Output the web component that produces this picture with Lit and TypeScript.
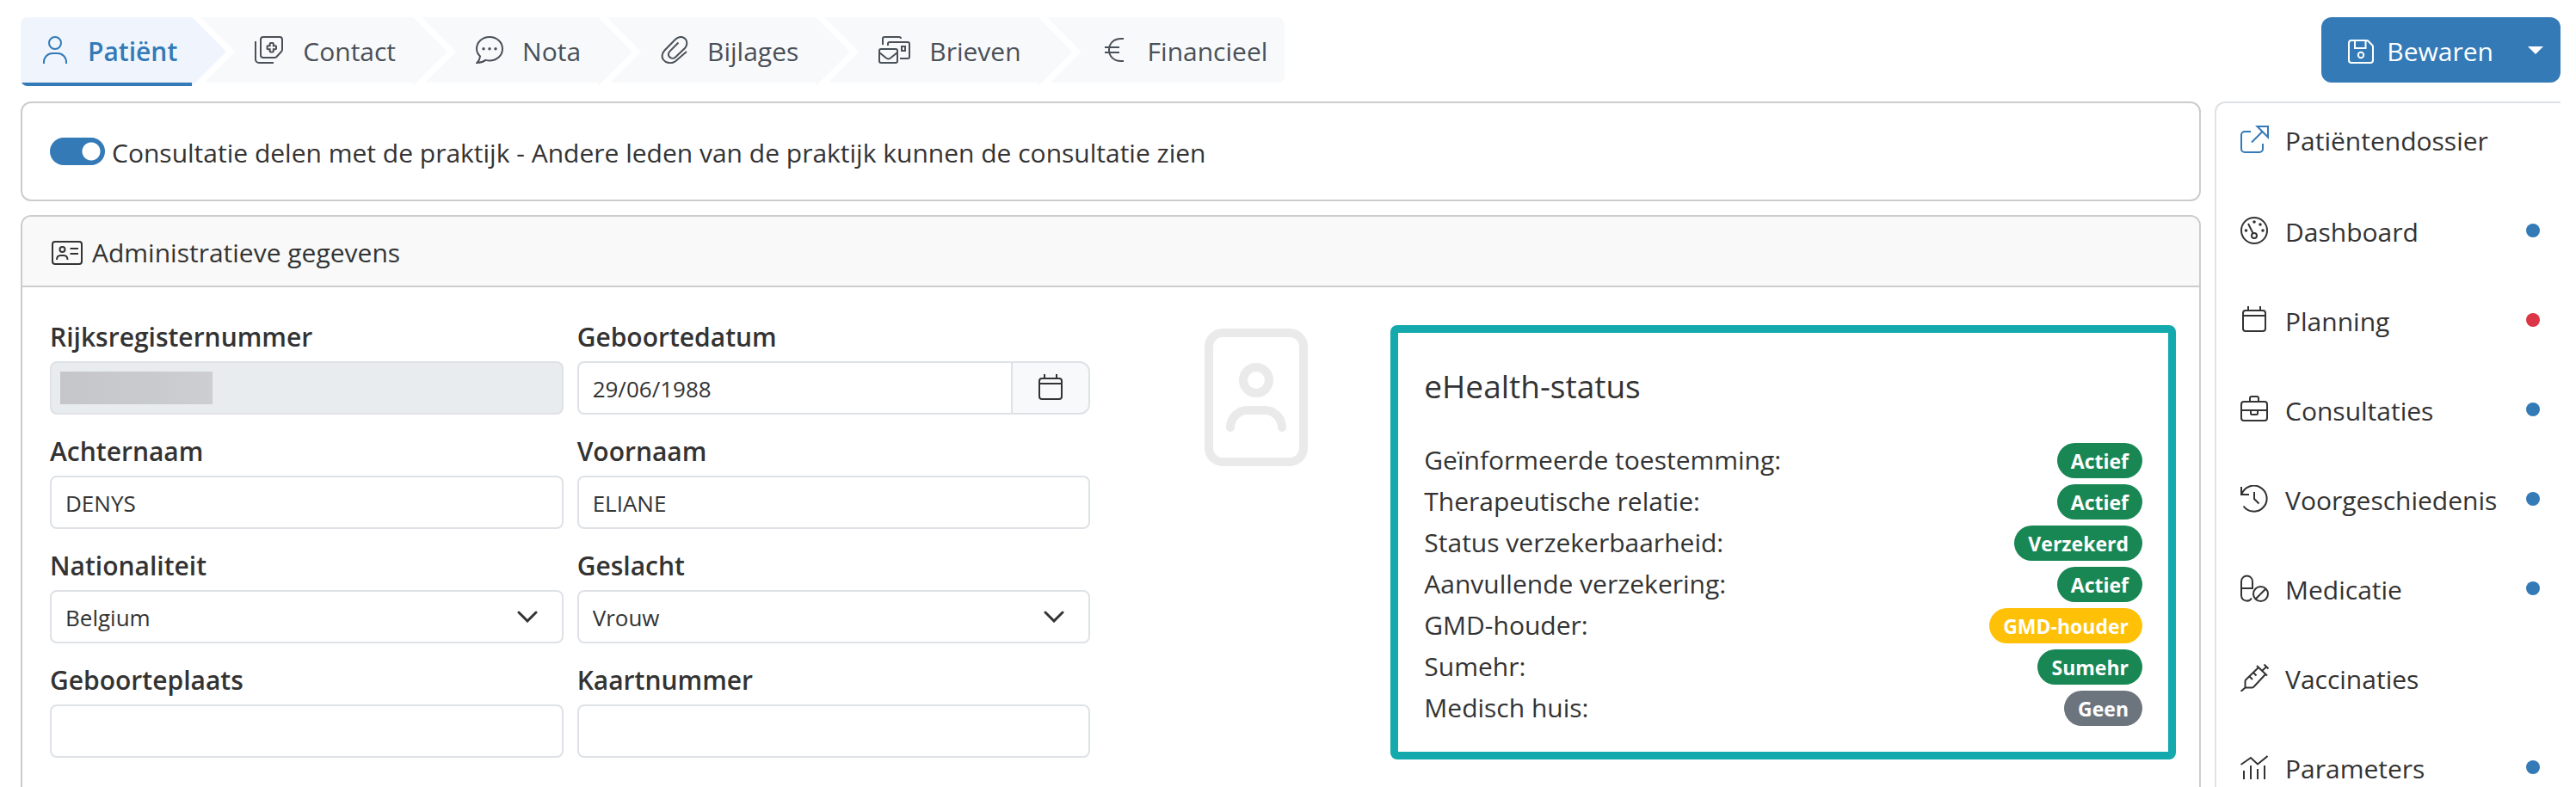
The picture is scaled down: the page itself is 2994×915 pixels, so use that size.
import { LitElement, html, svg, css, nothing } from "lit";
import type { SVGTemplateResult } from "lit";
import { customElement, property, state } from "lit/decorators.js";
import { classMap } from "lit/directives/class-map.js";

interface Glyph {
  w: number;
  h: number;
  body: SVGTemplateResult;
}

const glyphs: Record<string, Glyph> = {
  person: {
    w: 32, h: 32,
    body: svg`<circle cx="16" cy="8" r="7"/><path d="M3 32v-2a10 10 0 0 1 10-10h6a10 10 0 0 1 10 10v2"/>`,
  },
  contact: {
    w: 34, h: 32,
    body: svg`<path d="M10 1h19a3 3 0 0 1 3 3v11.500q0 1.500-1 2.500l-5.500 6q-1 1-2.500 1H10a3 3 0 0 1-3-3V4a3 3 0 0 1 3-3z"/><path d="M1 6v21a4 4 0 0 0 4 4h17"/><path d="M18.500 8h2.500q.8 0 .8.800v2.400h2.400q.8 0 .8.800v2.500q0 .8-.8.800h-2.400v2.400q0 .8-.8.800h-2.500q-.8 0-.8-.800v-2.400h-2.400q-.8 0-.8-.800v-2.500q0-.8.800-.800h2.400v-2.400q0-.8.800-.800z"/>`,
  },
  chat: {
    w: 32, h: 32,
    body: svg`<path d="M5 23.500C2.500 21 1 18 1 14.800C1 7 7.500 1 16 1s15 6 15 13.800S24.500 28.500 16 28.500c-1.500 0-3-.2-4.500-.6C8.500 30 5 31 1.500 31C3.600 28.800 4.800 26.500 5 23.500z"/><g fill="currentColor" stroke="none"><circle cx="9" cy="14.800" r="1.700"/><circle cx="16" cy="14.800" r="1.700"/><circle cx="23" cy="14.800" r="1.700"/></g>`,
  },
  clip: {
    w: 32, h: 32,
    body: svg`<path d="M30 18L17 29.300C12.500 32.500 6 31.500 3 27.500C.8 24 1.500 19.800 4.500 16.500L17 3.800C20.500.2 25.500 0 28.500 3.200C31.200 6.300 30.800 11 28 14L17 24.500C15 26.300 12 26.200 10.200 24.300C8.500 22.300 8.600 19.700 10.500 17.600L20.500 7.500"/>`,
  },
  mails: {
    w: 37, h: 32,
    body: svg`<path d="M5 10V3a2 2 0 0 1 2-2h17a2 2 0 0 1 2 2"/><path d="M11 11V9a2 2 0 0 1 2-2h21a2 2 0 0 1 2 2v15a2 2 0 0 1-2 2h-9"/><rect x="27" y="12" width="4" height="5"/><rect x="1" y="15" width="21" height="16" rx="2"/><path d="M1 19l8 6.500q2.500 1.800 5 0l8-6.500"/>`,
  },
  euro: {
    w: 32, h: 32,
    body: svg`<path d="M26 3h-3C14 3 9 9 9 16s5 13 14 13h3M4 13h17M4 19h17"/>`,
  },
  save: {
    w: 30, h: 28,
    body: svg`<path d="M4 1h17.500q1.200 0 2 .8l4.500 4.400q1 .9 1 2.200V24a3 3 0 0 1-3 3H4a3 3 0 0 1-3-3V4a3 3 0 0 1 3-3zM8 1v9h12.500V1"/><circle cx="15" cy="18" r="3.200"/>`,
  },
  external: {
    w: 33, h: 32,
    body: svg`<path d="M12 7H5a4 4 0 0 0-4 4v16a4 4 0 0 0 4 4h17a4 4 0 0 0 4-4v-6M13 19.500L25.500 7M19.500 1H32v12.500z"/>`,
  },
  gauge: {
    w: 32, h: 32,
    body: svg`<circle cx="16" cy="16" r="15"/><circle cx="16" cy="22" r="3"/><path d="M9 8l5.500 11"/><g fill="currentColor" stroke="none"><circle cx="16" cy="6" r="1.800"/><circle cx="23" cy="9" r="1.800"/><circle cx="6.500" cy="16" r="1.800"/><circle cx="26" cy="16" r="1.800"/></g>`,
  },
  calendar: {
    w: 32, h: 32,
    body: svg`<rect x="3" y="5" width="26" height="24" rx="3"/><path d="M3 11h26M9 0v5M23 0v5"/>`,
  },
  briefcase: {
    w: 32, h: 32,
    body: svg`<rect x="1" y="7" width="30" height="22" rx="3"/><path d="M11 7V3a2 2 0 0 1 2-2h6a2 2 0 0 1 2 2v4M1 17h30M12 17v3.500q0 1.500 1.500 1.500h5q1.500 0 1.500-1.500V17"/>`,
  },
  history: {
    w: 32, h: 32,
    body: svg`<path d="M1 2v9h9M1.500 10.500A15 15 0 1 1 3.500 24.500M16 8v8l5.500 5.500"/>`,
  },
  pills: {
    w: 33, h: 32,
    body: svg`<path d="M1 16V8a6.500 6.500 0 0 1 13 0v8H1v8.500a6.500 6.500 0 0 0 12 3"/><circle cx="23.500" cy="22.500" r="8.500"/><path d="M17.800 28.200L29.200 16.800"/>`,
  },
  syringe: {
    w: 33, h: 32,
    body: svg`<path d="M.5 32L5.500 27.500M5.500 27.500V20q0-1 .8-1.800L21 4M19 2l12 11.500M29 12L15.500 26.500q-1 1-2.200 1H5.500M10.500 14.500l3.500 3.500M15 10l3.500 3.500M25.500 7.500l5-4.500M27.500.5l5 5"/>`,
  },
  chart: {
    w: 32, h: 32,
    body: svg`<path d="M.5 13L12 5l8 7.500L31.500 3M4 30V20M12 30V14M20 30V18M28 30V14"/>`,
  },
  idcard: {
    w: 36, h: 28,
    body: svg`<rect x="1" y="1" width="34" height="26" rx="3"/><circle cx="12.500" cy="10" r="3"/><path d="M6 22q0-5 4.500-5h3.500q4.500 0 4.500 5M21.500 9H31M21.500 15H31"/>`,
  },
  chevron: {
    w: 24, h: 14,
    body: svg`<path d="M2 2l10 10L22 2" stroke-width="3" stroke-linecap="round"/>`,
  },
  caret: {
    w: 18, h: 9,
    body: svg`<path d="M0 0h18L9 9z" fill="currentColor" stroke="none"/>`,
  },
  badge: {
    w: 120, h: 160,
    body: svg`<g stroke-width="10" stroke-linecap="round"><rect x="5" y="5" width="110" height="150" rx="16"/><circle cx="60" cy="60" r="15"/><path d="M30 115a20 20 0 0 1 20-20h20a20 20 0 0 1 20 20"/></g>`,
  },
};

const icon = (name: string) => {
  const g = glyphs[name];
  return html`<svg
    width=${g.w}
    height=${g.h}
    viewBox="0 0 ${g.w} ${g.h}"
    fill="none"
    stroke="currentColor"
    stroke-width="2"
    aria-hidden="true"
  >${g.body}</svg>`;
};

const shared = css`
  * {
    box-sizing: border-box;
  }
  svg {
    display: block;
    flex: none;
  }
  button,
  input,
  select {
    margin: 0;
    font: inherit;
    color: inherit;
  }
  button {
    cursor: pointer;
  }
`;

@customElement("step-tabs")
class StepTabs extends LitElement {
  static styles = [
    shared,
    css`
      :host {
        display: block;
      }
      .tabs {
        display: flex;
        height: 80px;
        border-radius: 8px;
        overflow: hidden;
      }
      .tab {
        display: flex;
        align-items: center;
        gap: 22px;
        padding: 0 60px 4px 63px;
        margin-left: -30px;
        border: 0;
        background: #f8f9fb;
        color: #495057;
        white-space: nowrap;
        clip-path: polygon(
          0 0,
          calc(100% - 40px) 0,
          100% 40px,
          calc(100% - 40px) 80px,
          calc(100% - 40px) 76px,
          4px 76px,
          40px 40px
        );
      }
      .tab:first-child {
        padding-left: 24px;
        padding-right: 57px;
        margin-left: 0;
        clip-path: polygon(
          0 0,
          calc(100% - 40px) 0,
          100% 40px,
          calc(100% - 40px) 80px,
          0 80px
        );
      }
      .tab:last-child {
        padding-right: 20px;
        border-radius: 0 8px 12px 0;
        clip-path: polygon(0 0, 100% 0, 100% 76px, 4px 76px, 40px 40px);
      }
      .tab.active {
        background: linear-gradient(#337ab7, #337ab7) left bottom /
          calc(100% - 40px) 4px no-repeat #f0f5fd;
        color: #337ab7;
        font-weight: 600;
      }
      .text {
        padding-top: 4px;
      }
    `,
  ];

  @state() private current = "Patiënt";

  private steps = [
    ["Patiënt", "person"],
    ["Contact", "contact"],
    ["Nota", "chat"],
    ["Bijlages", "clip"],
    ["Brieven", "mails"],
    ["Financieel", "euro"],
  ];

  render() {
    return html`<nav class="tabs">
      ${this.steps.map(
        ([label, glyph]) => html`<button
          type="button"
          class=${classMap({ tab: true, active: label === this.current })}
          @click=${() => (this.current = label)}
        >${icon(glyph)}<span class="text">${label}</span></button>`
      )}
    </nav>`;
  }
}

@customElement("patient-form")
class PatientForm extends LitElement {
  static styles = [
    shared,
    css`
      :host {
        display: block;
      }
      .form {
        display: grid;
        grid-template-columns: 1fr 1fr;
        gap: 15px 16px;
      }
      .field {
        display: grid;
        min-width: 0;
      }
      .caption {
        font-weight: 600;
        line-height: 48px;
        padding: 4px 0;
      }
      .control {
        width: 100%;
        height: 62px;
        padding: 2px 16px 0;
        border: 2px solid #dee2e6;
        border-radius: 8px;
        background: #fff;
        font-size: 26px;
        outline-color: #337ab7;
      }
      .control:disabled {
        background: #e9ecef;
      }
      .stack {
        display: grid;
        align-items: center;
      }
      .stack > * {
        grid-area: 1 / 1;
      }
      .mask {
        width: 177px;
        height: 38px;
        margin-left: 12px;
        background: linear-gradient(90deg, #c5c6c9, #c8cbce 60%, #cdced1);
      }
      select.control {
        appearance: none;
      }
      .stack svg {
        justify-self: end;
        margin-right: 30px;
        pointer-events: none;
      }
      .group {
        display: flex;
      }
      .group .control {
        flex: 1;
        border-radius: 8px 0 0 8px;
      }
      .pick {
        display: grid;
        place-items: center;
        width: 92px;
        height: 62px;
        margin-left: -2px;
        border: 2px solid #dee2e6;
        border-radius: 0 12px 12px 0;
        background: #f8f9fa;
      }
    `,
  ];

  private text(id: string, label: string, value = "") {
    return html`<div class="field">
      <label class="caption" for=${id}>${label}</label>
      <input class="control" id=${id} type="text" .value=${value} />
    </div>`;
  }

  private choice(id: string, label: string, value: string) {
    return html`<div class="field">
      <label class="caption" for=${id}>${label}</label>
      <div class="stack">
        <select class="control" id=${id}>
          <option>${value}</option>
        </select>
        ${icon("chevron")}
      </div>
    </div>`;
  }

  render() {
    return html`<form class="form">
      <div class="field">
        <label class="caption" for="rrn">Rijksregisternummer</label>
        <div class="stack">
          <input class="control" id="rrn" type="text" disabled />
          <span class="mask"></span>
        </div>
      </div>
      <div class="field">
        <label class="caption" for="birth">Geboortedatum</label>
        <div class="group">
          <input class="control" id="birth" type="text" .value=${"29/06/1988"} />
          <button class="pick" type="button" aria-label="Kalender">
            ${icon("calendar")}
          </button>
        </div>
      </div>
      ${this.text("last", "Achternaam", "DENYS")}
      ${this.text("first", "Voornaam", "ELIANE")}
      ${this.choice("nation", "Nationaliteit", "Belgium")}
      ${this.choice("sex", "Geslacht", "Vrouw")}
      ${this.text("place", "Geboorteplaats")}
      ${this.text("card", "Kaartnummer")}
    </form>`;
  }
}

@customElement("ehealth-status")
class EhealthStatus extends LitElement {
  static styles = [
    shared,
    css`
      :host {
        display: block;
      }
      .box {
        border: 9px solid #13a9ad;
        border-radius: 8px;
        padding: 37px 30px 27px;
      }
      .title {
        margin: 0 0 37px;
        font-size: 37px;
        font-weight: 400;
        line-height: 50px;
      }
      .rows {
        margin: 0;
      }
      .row {
        display: flex;
        align-items: center;
        justify-content: space-between;
        height: 48px;
      }
      .state {
        margin: 0;
        padding: 2px 16px 0;
        border-radius: 21px;
        color: #fff;
        background: #198754;
        font-size: 23px;
        font-weight: 700;
        line-height: 39px;
      }
      .state.warn {
        background: #ffc107;
      }
      .state.none {
        background: #6c757d;
      }
    `,
  ];

  private rows = [
    ["Geïnformeerde toestemming:", "Actief", "ok"],
    ["Therapeutische relatie:", "Actief", "ok"],
    ["Status verzekerbaarheid:", "Verzekerd", "ok"],
    ["Aanvullende verzekering:", "Actief", "ok"],
    ["GMD-houder:", "GMD-houder", "warn"],
    ["Sumehr:", "Sumehr", "ok"],
    ["Medisch huis:", "Geen", "none"],
  ];

  render() {
    return html`<section class="box">
      <h2 class="title">eHealth-status</h2>
      <dl class="rows">
        ${this.rows.map(
          ([label, value, tone]) => html`<div class="row">
            <dt>${label}</dt>
            <dd class="state ${tone}">${value}</dd>
          </div>`
        )}
      </dl>
    </section>`;
  }
}

@customElement("side-menu")
class SideMenu extends LitElement {
  static styles = [
    shared,
    css`
      :host {
        display: block;
      }
      .menu {
        display: flex;
        flex-direction: column;
        padding-top: 16px;
      }
      .item {
        display: flex;
        align-items: center;
        height: 52px;
        margin-bottom: 52px;
        padding: 0 24px 0 28px;
        color: #333;
        text-decoration: none;
      }
      .item:first-child {
        margin-bottom: 54px;
      }
      .glyph {
        display: grid;
        width: 34px;
      }
      .glyph.accent {
        color: #337ab7;
      }
      .text {
        flex: 1;
        padding: 4px 0 0 18px;
        white-space: nowrap;
      }
      .dot {
        width: 16px;
        height: 16px;
        border-radius: 50%;
        background: #337ab7;
      }
      .dot.alert {
        background: #dc3545;
      }
    `,
  ];

  @property({ attribute: false }) items = [
    ["Patiëntendossier", "external", ""],
    ["Dashboard", "gauge", "info"],
    ["Planning", "calendar", "alert"],
    ["Consultaties", "briefcase", "info"],
    ["Voorgeschiedenis", "history", "info"],
    ["Medicatie", "pills", "info"],
    ["Vaccinaties", "syringe", ""],
    ["Parameters", "chart", "info"],
  ];

  render() {
    return html`<nav class="menu">
      ${this.items.map(
        ([label, glyph, dot]) => html`<a class="item" href="#">
          <span class=${classMap({ glyph: true, accent: glyph === "external" })}
            >${icon(glyph)}</span
          >
          <span class="text">${label}</span>
          ${dot ? html`<span class="dot ${dot}"></span>` : nothing}
        </a>`
      )}
    </nav>`;
  }
}

@customElement("app-root")
class AppRoot extends LitElement {
  static styles = [
    shared,
    css`
      :host {
        display: flex;
        flex-direction: column;
        height: 100vh;
        overflow: hidden;
        padding: 20px 18px 0 24px;
        box-sizing: border-box;
        background: #fff;
        color: #333;
        font-family: "Open Sans", "Noto Sans", sans-serif;
        font-size: 30px;
        line-height: 44px;
      }
      .top {
        display: flex;
        justify-content: space-between;
        align-items: flex-start;
        margin-bottom: 18px;
      }
      .save {
        display: flex;
        height: 76px;
        border-radius: 12px;
        background: #337ab7;
        color: #fff;
      }
      .save button {
        display: flex;
        align-items: center;
        border: 0;
        background: none;
      }
      .main-action {
        gap: 15px;
        padding: 4px 20px 0 31px;
      }
      .more {
        padding: 0 20px;
      }
      .columns {
        display: flex;
        flex: 1;
        gap: 16px;
        min-height: 0;
      }
      .content {
        display: flex;
        flex: 1;
        flex-direction: column;
        gap: 16px;
        min-width: 0;
      }
      .side {
        width: 402px;
        overflow: hidden;
        border: solid #dee2e6;
        border-width: 2px 0 0 2px;
        border-radius: 12px 0 0 0;
      }
      .card {
        border: 2px solid #ccc;
        border-radius: 12px;
      }
      .share {
        display: flex;
        align-items: center;
        gap: 8px;
        height: 116px;
        padding: 0 32px;
      }
      .share label {
        padding-top: 4px;
      }
      .switch {
        appearance: none;
        width: 64px;
        height: 32px;
        border-radius: 16px;
        background: radial-gradient(circle at 16px 16px, #fff 10px, #adb5bd 11px);
      }
      .switch:checked {
        background: radial-gradient(circle at 48px 16px, #fff 10px, #337ab7 11px);
      }
      .admin {
        flex: 1;
        min-height: 0;
        overflow: hidden;
        border-bottom: 0;
        border-radius: 12px 12px 0 0;
      }
      .head {
        display: flex;
        align-items: center;
        gap: 11px;
        height: 82px;
        padding: 4px 34px 0;
        border-bottom: 2px solid #ccc;
        background: #f9f9f9;
      }
      .head h1 {
        margin: 0;
        font: inherit;
      }
      .body {
        display: grid;
        grid-template-columns: minmax(0, 53fr) auto minmax(0, 40fr);
        align-items: start;
        padding: 30px 27px 0 32px;
      }
      .body ehealth-status {
        padding-top: 14px;
      }
      .photo {
        padding: 18px 96px 0 133px;
        color: #eaeaea;
      }
    `,
  ];

  render() {
    return html`
      <header class="top">
        <step-tabs></step-tabs>
        <div class="save">
          <button class="main-action" type="button">
            ${icon("save")}<span>Bewaren</span>
          </button>
          <button class="more" type="button" aria-label="Meer">
            ${icon("caret")}
          </button>
        </div>
      </header>
      <div class="columns">
        <main class="content">
          <section class="card share">
            <input class="switch" id="share" type="checkbox" role="switch" checked />
            <label for="share"
              >Consultatie delen met de praktijk - Andere leden van de praktijk
              kunnen de consultatie zien</label
            >
          </section>
          <section class="card admin">
            <header class="head">
              ${icon("idcard")}
              <h1>Administratieve gegevens</h1>
            </header>
            <div class="body">
              <patient-form></patient-form>
              <div class="photo">${icon("badge")}</div>
              <ehealth-status></ehealth-status>
            </div>
          </section>
        </main>
        <aside class="side"><side-menu></side-menu></aside>
      </div>
    `;
  }
}
